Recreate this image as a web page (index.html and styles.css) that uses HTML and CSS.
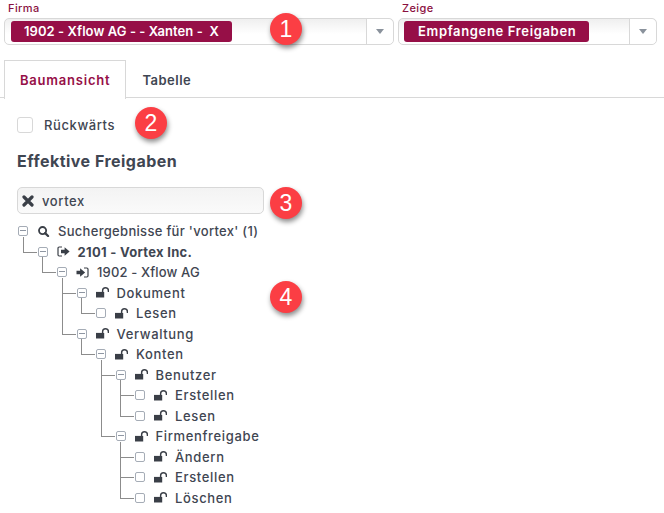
FILE: index.html
```html
<!DOCTYPE html>
<html lang="de">
<head>
<meta charset="UTF-8">
<meta name="viewport" content="width=device-width, initial-scale=1.0">
<title>Freigaben</title>
<link rel="stylesheet" href="styles.css">
</head>
<body>

<svg class="sprites" width="0" height="0">
    <symbol id="i-lock" viewBox="0 0 13 10">
        <path d="M0 4.4h8.2v5.6H0z"/>
        <path d="M6.6 4.6V3.2a2.9 2.9 0 0 1 5.8 0v1.4" fill="none" stroke="currentColor" stroke-width="1.4"/>
    </symbol>
    <symbol id="i-search" viewBox="0 0 12 12">
        <circle cx="5" cy="5" r="3.9" fill="none" stroke="currentColor" stroke-width="2"/>
        <path d="M7.8 7.8l3.2 3.2" stroke="currentColor" stroke-width="2.4" stroke-linecap="round"/>
    </symbol>
    <symbol id="i-out" viewBox="0 0 13 11">
        <path d="M5 1H2.2A1.2 1.2 0 0 0 1 2.2v6.6A1.2 1.2 0 0 0 2.2 10H5" fill="none" stroke="currentColor" stroke-width="1.2"/>
        <path d="M4 3.8h3.6V1.2l5 4.3-5 4.3V7.2H4z"/>
    </symbol>
    <symbol id="i-in" viewBox="0 0 13 11">
        <path d="M8 1h2.8A1.2 1.2 0 0 1 12 2.2v6.6a1.2 1.2 0 0 1-1.2 1.2H8" fill="none" stroke="currentColor" stroke-width="1.2"/>
        <path d="M0.5 3.8h3.6V1.2l5 4.3-5 4.3V7.2H0.5z"/>
    </symbol>
    <symbol id="i-clear" viewBox="0 0 12 12">
        <path d="M2 2l8 8M10 2l-8 8" stroke="currentColor" stroke-width="3.2" stroke-linecap="round"/>
    </symbol>
</svg>

<div class="filters">
    <div class="field">
        <label class="field-label">Firma</label>
        <div class="select">
            <div class="select-value"><span class="chip chip-company">1902 - Xflow AG - - Xanten -&nbsp; X</span></div>
            <div class="select-arrow"><span class="caret"></span></div>
        </div>
    </div>
    <div class="field">
        <label class="field-label">Zeige</label>
        <div class="select">
            <div class="select-value"><span class="chip chip-show">Empfangene Freigaben</span></div>
            <div class="select-arrow"><span class="caret"></span></div>
        </div>
    </div>
</div>

<div class="tabs">
    <a class="tab active">Baumansicht</a>
    <a class="tab">Tabelle</a>
</div>

<div class="content">
    <div class="backwards">
        <span class="big-check"></span>
        <span>Rückwärts</span>
    </div>

    <h2>Effektive Freigaben</h2>

    <div class="search">
        <svg class="search-clear"><use href="#i-clear"/></svg>
        <span>vortex</span>
    </div>

    <ul class="tree">
        <li>
            <div class="row tight"><span class="box minus"></span><svg class="ico"><use href="#i-search"/></svg><span>Suchergebnisse für 'vortex' (1)</span></div>
            <ul>
                <li class="last">
                    <div class="row tight"><span class="box minus"></span><svg class="ico"><use href="#i-out"/></svg><b>2101 - Vortex Inc.</b></div>
                    <ul>
                        <li class="last">
                            <div class="row tighter"><span class="box minus"></span><svg class="ico"><use href="#i-in"/></svg><span>1902 - Xflow AG</span></div>
                            <ul>
                                <li>
                                    <div class="row"><span class="box minus"></span><svg class="ico"><use href="#i-lock"/></svg><span>Dokument</span></div>
                                    <ul>
                                        <li class="last"><div class="row"><span class="box"></span><svg class="ico"><use href="#i-lock"/></svg><span>Lesen</span></div></li>
                                    </ul>
                                </li>
                                <li class="last">
                                    <div class="row"><span class="box minus"></span><svg class="ico"><use href="#i-lock"/></svg><span>Verwaltung</span></div>
                                    <ul>
                                        <li class="last">
                                            <div class="row"><span class="box minus"></span><svg class="ico"><use href="#i-lock"/></svg><span>Konten</span></div>
                                            <ul>
                                                <li>
                                                    <div class="row"><span class="box minus"></span><svg class="ico"><use href="#i-lock"/></svg><span>Benutzer</span></div>
                                                    <ul>
                                                        <li><div class="row"><span class="box"></span><svg class="ico"><use href="#i-lock"/></svg><span>Erstellen</span></div></li>
                                                        <li class="last"><div class="row"><span class="box"></span><svg class="ico"><use href="#i-lock"/></svg><span>Lesen</span></div></li>
                                                    </ul>
                                                </li>
                                                <li class="last">
                                                    <div class="row"><span class="box minus"></span><svg class="ico"><use href="#i-lock"/></svg><span>Firmenfreigabe</span></div>
                                                    <ul>
                                                        <li><div class="row"><span class="box"></span><svg class="ico"><use href="#i-lock"/></svg><span>Ändern</span></div></li>
                                                        <li><div class="row"><span class="box"></span><svg class="ico"><use href="#i-lock"/></svg><span>Erstellen</span></div></li>
                                                        <li class="last"><div class="row"><span class="box"></span><svg class="ico"><use href="#i-lock"/></svg><span>Löschen</span></div></li>
                                                    </ul>
                                                </li>
                                            </ul>
                                        </li>
                                    </ul>
                                </li>
                            </ul>
                        </li>
                    </ul>
                </li>
            </ul>
        </li>
    </ul>
</div>

<!-- Markierungen über dem Screenshot -->
<span class="marker m1">1</span>
<span class="marker m2">2</span>
<span class="marker m3">3</span>
<span class="marker m4">4</span>

</body>
</html>
```

FILE: styles.css
```css
:root {
    --wine: #960f47;
    --text: #3f4652;
    --line: #d8d8d8;
}
html, body {
    height: 100%;
}
body {
    margin: 0;
    padding: 0;
    position: relative;
    overflow: hidden;
    background: #fff;
    font-family: Inter, "Open Sans", sans-serif;
    font-size: 13px;
    font-weight: 500;
    letter-spacing: 0.6px;
    color: var(--text);
}
.sprites {
    position: absolute;
}
.filters {
    display: grid;
    grid-template-columns: 390px 259px;
    column-gap: 4px;
    padding: 3px 0 0 4px;
}
.field-label {
    display: block;
    height: 15px;
    padding-left: 4px;
    font-size: 11px;
    line-height: 11px;
    letter-spacing: 0.4px;
    color: #8a1040;
}
.select {
    display: flex;
    height: 27px;
    box-sizing: border-box;
    border: 1px solid var(--line);
    border-radius: 5px;
    background: linear-gradient(#efefef, #fff 60%);
}
.select-value {
    flex: 1;
    padding: 2px 6px;
}
.select-arrow {
    width: 26px;
    display: flex;
    align-items: center;
    justify-content: center;
    border-left: 1px solid var(--line);
    background: #fff;
    border-radius: 0 5px 5px 0;
}
.caret {
    width: 0;
    height: 0;
    border-left: 4px solid transparent;
    border-right: 4px solid transparent;
    border-top: 5px solid #8a929c;
}
.chip {
    display: block;
    height: 21px;
    line-height: 21px;
    border-radius: 3px;
    background: var(--wine);
    color: #fff;
    font-weight: 600;
    box-sizing: border-box;
    white-space: nowrap;
}
.chip-company {
    width: 221px;
    padding-left: 13px;
    letter-spacing: 0.07px;
}
.chip-show {
    width: 185px;
    margin-left: -1px;
    padding-left: 14px;
    letter-spacing: 0.65px;
}
.tabs {
    display: flex;
    margin-top: 15px;
    height: 37px;
    padding-left: 4px;
    border-bottom: 1px solid var(--line);
}
.tab {
    height: 37px;
    line-height: 38px;
    padding: 0 15px;
    font-weight: 600;
    letter-spacing: 0.5px;
    border: 1px solid transparent;
    border-bottom: none;
}
.tab.active {
    height: 38px;
    letter-spacing: 0.78px;
    color: var(--wine);
    background: #fff;
    border-color: var(--line);
}
.content {
    padding: 19px 0 0 17px;
}
.backwards {
    display: flex;
    align-items: center;
    gap: 11px;
    height: 16px;
}
.big-check {
    width: 16px;
    height: 16px;
    box-sizing: border-box;
    border: 1px solid var(--line);
    border-radius: 3px;
}
h2 {
    margin: 18px 0 16px;
    font-size: 16px;
    line-height: 20px;
    font-weight: 700;
    letter-spacing: 0.48px;
}
.search {
    width: 247px;
    height: 27px;
    box-sizing: border-box;
    display: flex;
    align-items: center;
    gap: 8px;
    padding-left: 4px;
    border: 1px solid var(--line);
    border-radius: 5px;
    background: linear-gradient(#f3f3f3, #fafafa);
}
.search-clear {
    flex: none;
    width: 12px;
    height: 12px;
    color: #3a3f47;
}
.tree, .tree ul {
    list-style: none;
    margin: 0;
    padding: 0;
}
.tree {
    margin: 7px 0 0 1px;
}
.tree ul li {
    position: relative;
    margin-left: 19.5px;
}
.tree ul li::before {
    content: "";
    position: absolute;
    left: -15px;
    top: -5px;
    width: 13px;
    height: 15px;
    border-left: 1px solid #8c8c8c;
    border-bottom: 1px solid #8c8c8c;
}
.tree ul li:not(.last)::after {
    content: "";
    position: absolute;
    left: -15px;
    top: 0;
    bottom: 0;
    border-left: 1px solid #8c8c8c;
}
.row {
    display: flex;
    align-items: center;
    height: 20.5px;
    white-space: nowrap;
    letter-spacing: 0.65px;
}
.row.tight {
    letter-spacing: 0.3px;
}
.row.tighter {
    letter-spacing: 0.15px;
}
.box {
    position: relative;
    flex: none;
    width: 10px;
    height: 10px;
    box-sizing: border-box;
    border: 1px solid #a5acb6;
    border-radius: 2px;
    margin-right: 9px;
    background: #fff;
}
.box.minus::after {
    content: "";
    position: absolute;
    left: 1px;
    right: 1px;
    top: 3px;
    height: 1px;
    background: #8f97a3;
}
.ico {
    flex: none;
    width: 13px;
    height: 11px;
    margin-right: 8px;
    fill: #3a3f47;
    color: #3a3f47;
}
.row b {
    font-weight: 700;
}
.marker {
    position: absolute;
    width: 32px;
    height: 32px;
    border-radius: 50%;
    background: #fb3e44;
    color: #fff;
    font-family: "Liberation Sans", Arial, sans-serif;
    font-size: 23px;
    font-weight: 400;
    letter-spacing: 0;
    line-height: 32px;
    text-align: center;
    box-shadow: 1px 3px 5px rgba(0, 0, 0, 0.45);
}
.m1 { left: 270px; top: 13px; }
.m2 { left: 135px; top: 107px; }
.m3 { left: 270px; top: 187px; }
.m4 { left: 270px; top: 281px; }
```
